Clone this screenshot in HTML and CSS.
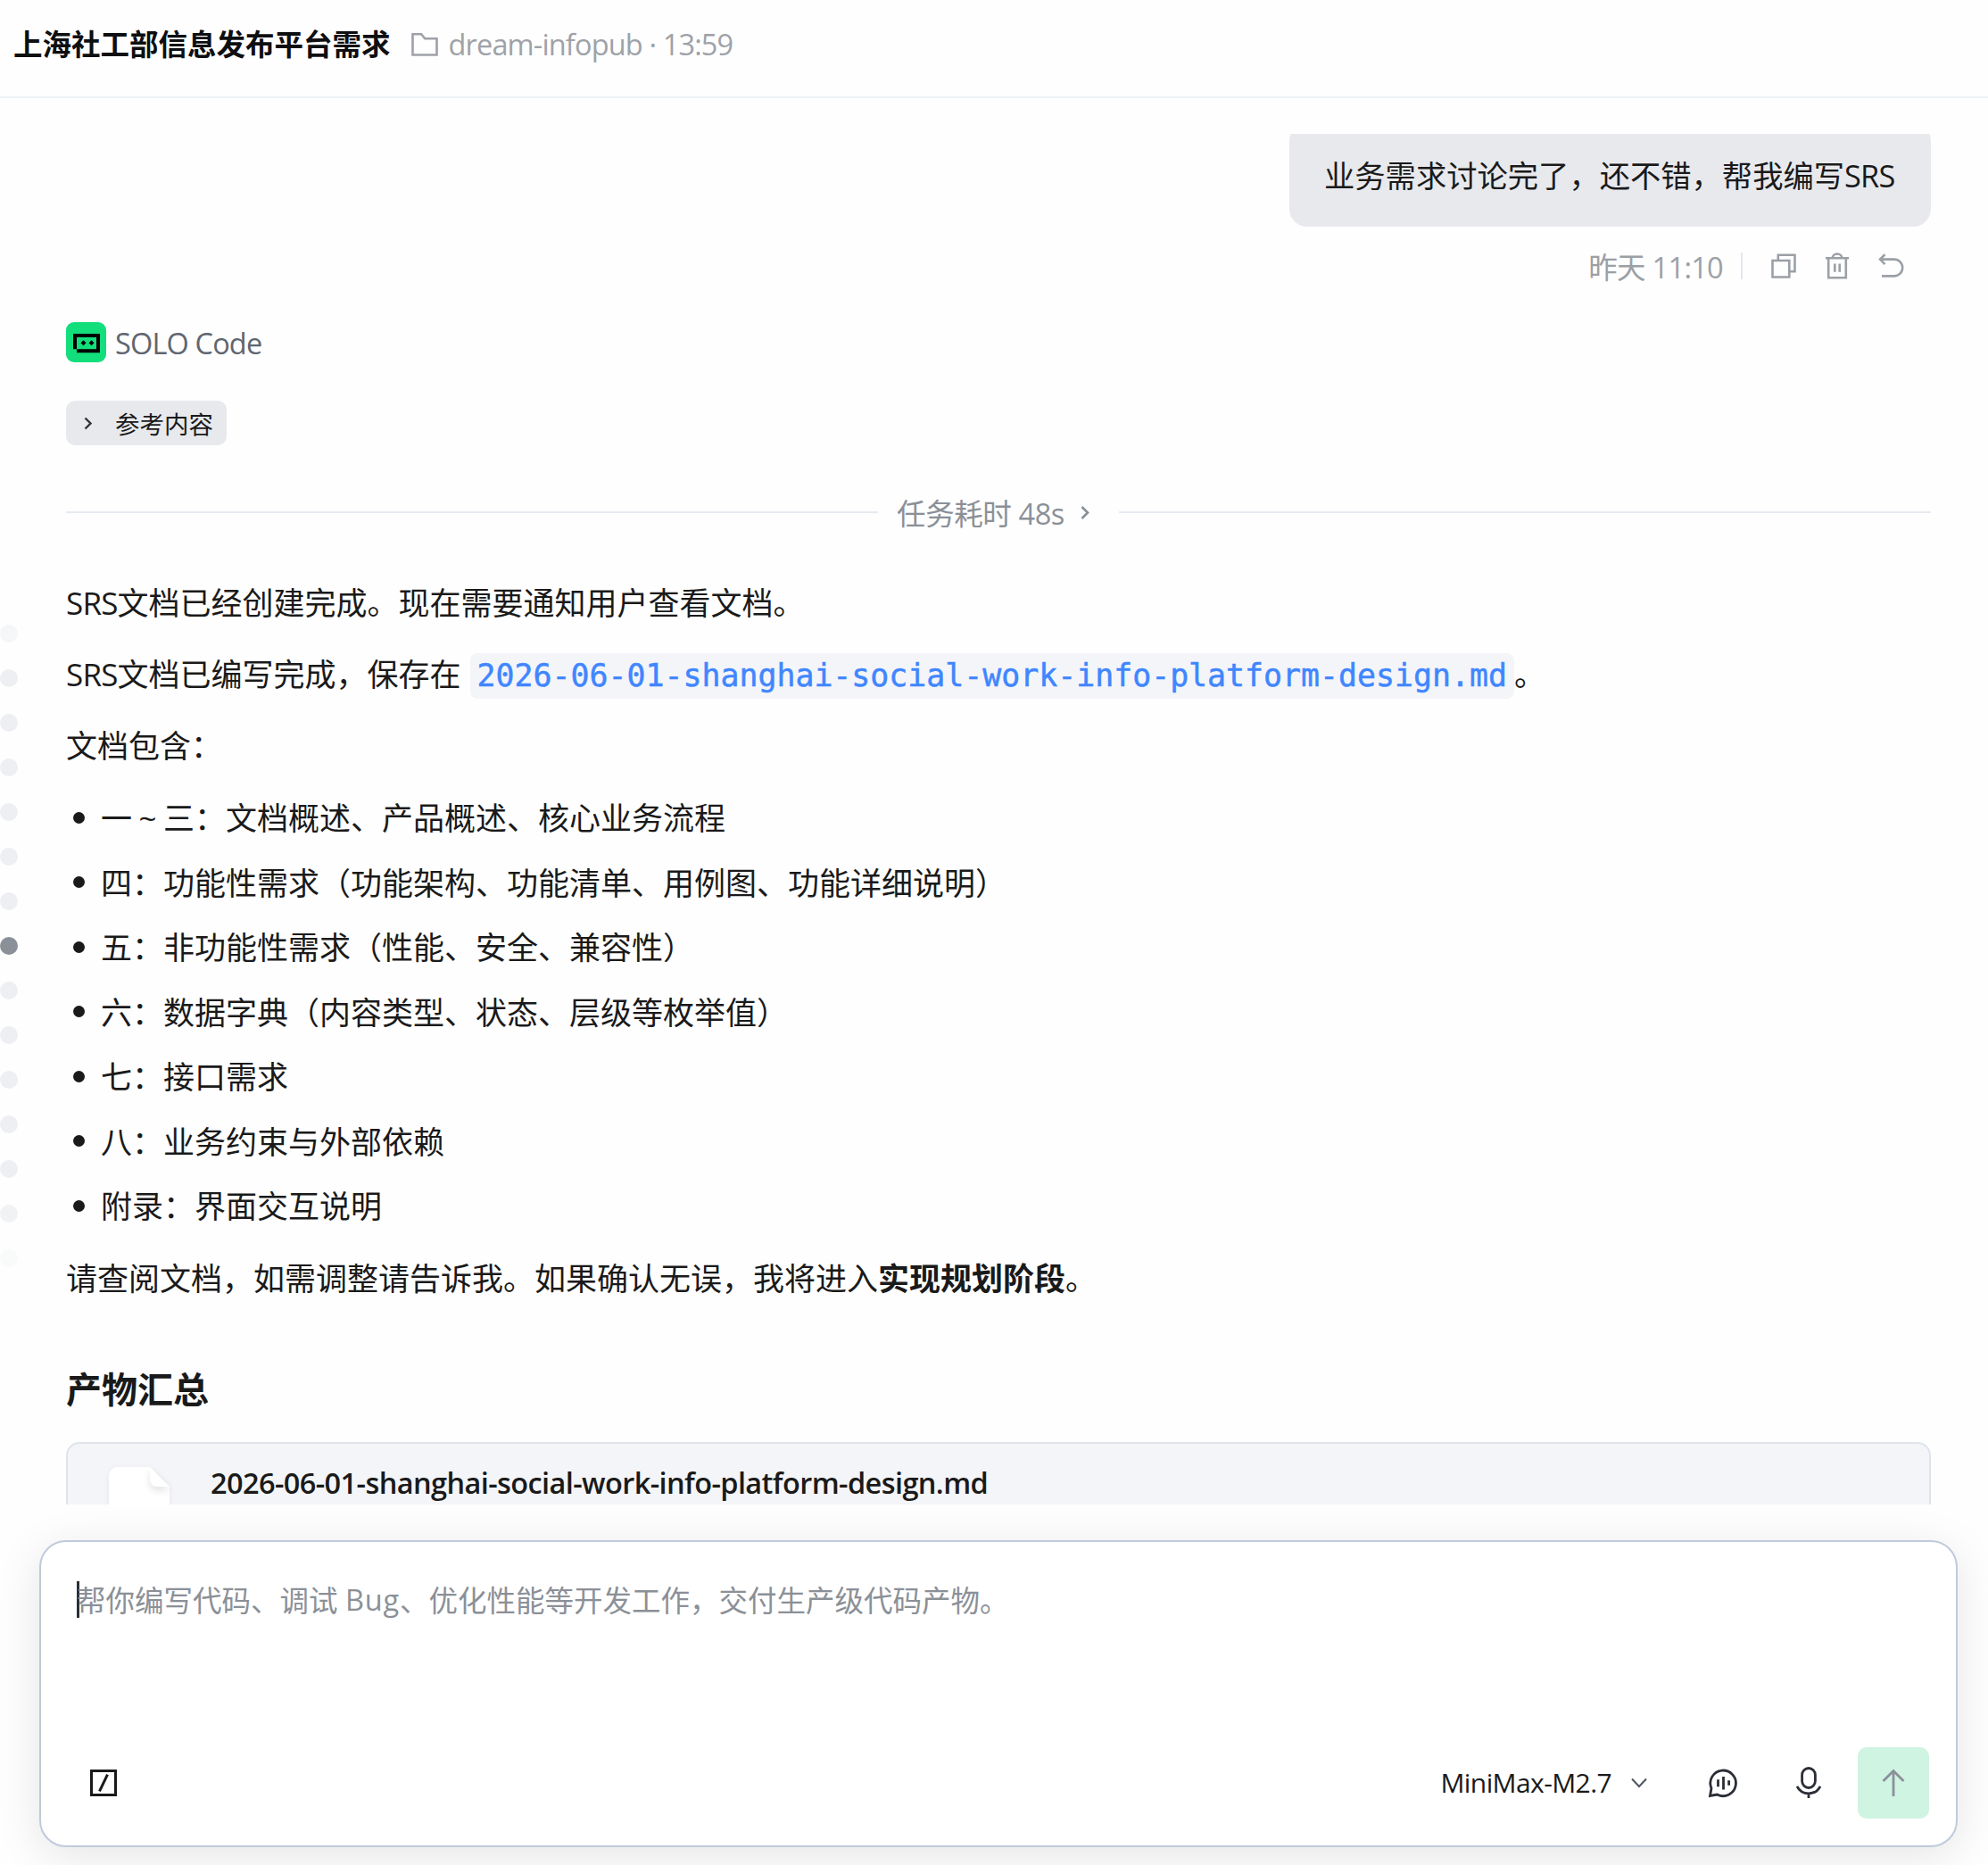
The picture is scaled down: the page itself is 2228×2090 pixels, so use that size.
FILE: index.html
```html
<!DOCTYPE html>
<html lang="zh-CN">
  <head>
    <meta charset="utf-8">
    <title>上海社工部信息发布平台需求</title>
    <link rel="stylesheet" href="styles.css">
  </head>
  <body>
    <header class="topbar">
      <h1 class="title">上海社工部信息发布平台需求</h1>
      <svg class="folder" width="30" height="28" viewBox="0 0 30 28" fill="none" stroke="currentColor" stroke-width="2.6"><path d="M1.5 25.5V2.3h9.7l4 5H28.5v18.2z"/></svg>
      <span class="project">dream-infopub · 13:59</span>
    </header>

    <main class="chat">
      <nav class="rail">
        <i class="dot faint"></i>
        <i class="dot"></i>
        <i class="dot"></i>
        <i class="dot"></i>
        <i class="dot"></i>
        <i class="dot"></i>
        <i class="dot"></i>
        <i class="dot active"></i>
        <i class="dot"></i>
        <i class="dot"></i>
        <i class="dot"></i>
        <i class="dot"></i>
        <i class="dot"></i>
        <i class="dot light"></i>
        <i class="dot fainter"></i>
      </nav>

      <div class="messages">
        <div class="bubble">业务需求讨论完了，还不错，帮我编写<span class="en">SRS</span></div>
        <div class="meta">
          <span class="time">昨天 11:10</span>
          <span class="sep"></span>
          <svg width="28" height="28" viewBox="0 0 28 28" fill="none" stroke="currentColor" stroke-width="2.6"><path d="M1.5 8h18.8v18.5H1.5z"/><path d="M7.8 7.5V1.8h18.7v18.4h-5.7"/></svg>
          <svg width="28" height="30" viewBox="0 0 28 30" fill="none" stroke="currentColor" stroke-width="2.6"><path d="M1 6.3h26M4.2 6.3v21.9h19.6V6.3M8.7 6.3a5.3 4.8 0 0 1 10.6 0M11.3 12.5v9.3M16.7 12.5v9.3"/></svg>
          <svg width="30" height="28" viewBox="0 0 30 28" fill="none" stroke="currentColor" stroke-width="2.6"><path d="M7.5 1.2L2 6.6l5.5 5.6M2.5 6.6h15.3a9.4 9.4 0 0 1 0 18.8H4"/></svg>
        </div>

        <div class="agent">
          <svg width="45" height="45" viewBox="0 0 45 45"><rect width="45" height="45" rx="9" fill="#12de7b"/><path d="M8 13h30v21.3H12v-4H8zM12 17v13.3h22V17z" fill="#000" fill-rule="evenodd"/><path d="M19.5 20.2l3 3-3 3-3-3zM28.5 20.2l3 3-3 3-3-3z" fill="#000"/></svg>
          <span class="agent-name">SOLO Code</span>
        </div>

        <div class="chip">
          <svg width="10" height="15" viewBox="0 0 10 15" fill="none" stroke="#303338" stroke-width="2.4"><path d="M1.5 1.5l6 6-6 6"/></svg>
          <span>参考内容</span>
        </div>

        <div class="cost">
          <span class="cost-text">任务耗时 48s</span>
          <svg width="11" height="17" viewBox="0 0 11 17" fill="none" stroke="currentColor" stroke-width="2.6"><path d="M1.5 2l6.5 6.5L1.5 15"/></svg>
        </div>

        <div class="answer">
          <p><span class="en">SRS</span>文档已经创建完成。现在需要通知用户查看文档。</p>
          <p><span class="en">SRS</span>文档已编写完成，保存在<code>2026-06-01-shanghai-social-work-info-platform-design.md</code>。</p>
          <p>文档包含：</p>
          <ul>
            <li>一<span class="tilde">~</span>三：文档概述、产品概述、核心业务流程</li>
            <li>四：功能性需求（功能架构、功能清单、用例图、功能详细说明）</li>
            <li>五：非功能性需求（性能、安全、兼容性）</li>
            <li>六：数据字典（内容类型、状态、层级等枚举值）</li>
            <li>七：接口需求</li>
            <li>八：业务约束与外部依赖</li>
            <li>附录：界面交互说明</li>
          </ul>
          <p>请查阅文档，如需调整请告诉我。如果确认无误，我将进入<strong>实现规划阶段</strong>。</p>
        </div>

        <h2 class="summary">产物汇总</h2>
        <div class="file">
          <svg class="file-icon" width="68" height="84" viewBox="0 0 68 84"><path d="M10 0h36l22 22v62H0V10A10 10 0 0 1 10 0z" fill="#fff"/><path class="fold" d="M46 0l22 22H54a8 8 0 0 1-8-8z" fill="#fff"/></svg>
          <span class="file-name">2026-06-01-shanghai-social-work-info-platform-design.md</span>
        </div>
      </div>
    </main>

    <section class="composer">
      <div class="input"><span class="caret"></span>帮你编写代码、调试 <span class="bug">Bug</span>、优化性能等开发工作，交付生产级代码产物。</div>
      <div class="tools">
        <svg class="slash" width="30" height="30" viewBox="0 0 30 30" fill="none" stroke="#1a1a1a" stroke-width="3"><path d="M1.5 1.5h27v27h-27z"/><path d="M19.5 5.7l-9 18.6"/></svg>
        <span class="model">MiniMax-M2.7</span>
        <svg class="down" width="18" height="12" viewBox="0 0 18 12" fill="none" stroke="#50565f" stroke-width="2"><path d="M1 1.5l8 8.5 8-8.5"/></svg>
        <svg class="voice" width="34" height="34" viewBox="0 0 34 34" fill="none" stroke="#2b2e35" stroke-width="2.8"><path d="M2.500 31.500l1.500-8.500A14.300 14.300 0 1 1 10.500 30z"/><path d="M11.500 13.200v8M17.500 10v14.500M23.600 14.200v5.500"/></svg>
        <svg class="mic" width="30" height="36" viewBox="0 0 30 36" fill="none" stroke="#2b2e35" stroke-width="2.8"><rect x="7.6" y="1.5" width="14.8" height="22" rx="7.4"/><path d="M2 21.8c2.5 5 7 8 13 8s10.5-3 13-8M15 29.8v5.2"/></svg>
        <button class="send">
          <svg width="26" height="32" viewBox="0 0 26 32" fill="none" stroke="#8b909b" stroke-width="2.8"><path d="M13 31V2.5M1.5 14L13 2.5 24.5 14"/></svg>
        </button>
      </div>
    </section>
  </body>
</html>
```

FILE: styles.css
```css
* {
  box-sizing: border-box;
}
body {
  margin: 0;
  width: 2228px;
  height: 2090px;
  overflow: hidden;
  display: flex;
  flex-direction: column;
  background: #fefefe;
  color: #1a1a1a;
  font-family: "Open Sans", "Noto Sans CJK SC", sans-serif;
  font-size: 35px;
}
svg {
  display: block;
  flex: none;
}

/* header */
.topbar {
  display: flex;
  align-items: center;
  height: 110px;
  padding: 0 15px 9px;
  border-bottom: 2px solid #edf1f7;
  color: #9ea2a8;
}
.title {
  margin: 0;
  font-size: 32.5px;
  line-height: 50px;
  font-weight: 700;
  color: #0e0f11;
}
.folder {
  margin-left: 23px;
}
.project {
  margin-left: 12px;
  font-size: 32.5px;
  letter-spacing: -0.85px;
}

/* conversation */
.chat {
  display: flex;
  height: 1536px;
  margin-top: 40px;
  overflow: hidden;
}
.rail {
  width: 20px;
  padding-top: 550px;
  display: flex;
  flex-direction: column;
  gap: 30px;
}
.dot {
  flex: none;
  width: 20px;
  height: 20px;
  border-radius: 50%;
  background: #edeff2;
}
.dot.active {
  background: #8a9098;
}
.dot.light {
  background: #f1f2f4;
}
.dot.faint {
  background: #f5f6f7;
}
.dot.fainter {
  background: #f9fafa;
}
.messages {
  width: 2090px;
  margin-left: 54px;
  display: flex;
  flex-direction: column;
  flex: none;
}
.messages > * {
  flex: none;
}
.bubble {
  align-self: flex-end;
  width: 719px;
  height: 116px;
  margin-top: -12px;
  padding: 0 0 0 39px;
  border-radius: 20px;
  background: #e8e9ed;
  font-size: 34.3px;
  line-height: 118px;
  white-space: nowrap;
}
.meta {
  align-self: flex-end;
  display: flex;
  align-items: center;
  height: 50px;
  margin: 19px 29px 0 0;
  color: #9ba0a6;
}
.meta svg + svg {
  margin-left: 32px;
}
.time {
  font-size: 32.5px;
  letter-spacing: -0.7px;
}
.sep {
  width: 2px;
  height: 30px;
  margin: 0 32px 0 20px;
  background: #e2e6ee;
}
.agent {
  display: flex;
  align-items: center;
  height: 45px;
  margin-top: 38px;
}
.agent-name {
  margin: 2px 0 0 10px;
  font-size: 32.5px;
  letter-spacing: -0.85px;
  color: #5f6670;
}
.chip {
  display: flex;
  align-items: center;
  width: 180px;
  height: 50px;
  margin-top: 43px;
  padding-left: 20px;
  border-radius: 10px;
  background: #e8e9ed;
  font-size: 27.5px;
}
.chip span {
  margin-left: 25px;
}
.cost {
  display: flex;
  align-items: center;
  height: 50px;
  margin-top: 50px;
  color: #8b9097;
  font-size: 32.5px;
}
.cost::before,
.cost::after {
  content: "";
  flex: 1;
  height: 2px;
  background: #e6eaf1;
}
.cost-text {
  margin: 0 18px 0 21px;
  letter-spacing: -0.4px;
}
.cost svg {
  margin-right: 32px;
}

/* answer text */
.answer {
  margin-top: 49px;
  line-height: 56px;
  white-space: nowrap;
}
.answer p {
  height: 56px;
  margin: 0 0 24px;
}
.answer ul {
  list-style: none;
  margin: 0 0 25px;
  padding: 1px 0 0;
  display: flex;
  flex-direction: column;
  gap: 16.5px;
}
.answer li {
  display: flex;
  align-items: center;
  height: 56px;
}
.answer li::before {
  content: "";
  width: 13px;
  height: 13px;
  margin: 0 18px 2px 8px;
  border-radius: 50%;
  background: #1a1a1a;
}
.en {
  letter-spacing: -0.8px;
}
.tilde {
  width: 35px;
  text-align: center;
}
code {
  margin-left: 10px;
  padding: 5px 8px 6px;
  border-radius: 8px;
  background: #f4f5f8;
  color: #4086ff;
  font-family: "DejaVu Sans Mono", monospace;
  font-size: 34.87px;
  -webkit-text-stroke: 0.5px #4086ff;
}
.summary {
  margin: 42px 0 0;
  font-size: 40px;
  line-height: 60px;
}
.file {
  display: flex;
  height: 150px;
  margin-top: 29px;
  padding: 26px 46px;
  border: 2px solid #dfe4eb;
  border-radius: 15px;
  background: #f4f5f8;
}
.file-icon {
  overflow: visible;
  filter: drop-shadow(0 2px 3px rgba(0, 0, 0, .06));
}
.fold {
  filter: drop-shadow(0 4px 4px rgba(0, 0, 0, .12));
}
.file-name {
  margin-left: 46px;
  font-size: 32.5px;
  line-height: 36px;
  font-weight: 600;
  letter-spacing: -0.6px;
}

/* composer */
.composer {
  width: 2150px;
  height: 344px;
  margin: 40px 0 0 44px;
  padding: 36px 30px 30px 40px;
  display: flex;
  flex-direction: column;
  justify-content: space-between;
  border: 2px solid #bfcadc;
  border-radius: 30px;
  background: #fff;
  box-shadow: 0 10px 50px rgba(0, 0, 0, .1);
}
.input {
  display: flex;
  align-items: center;
  height: 56px;
  font-size: 32.5px;
  color: #8b9097;
  white-space: pre;
}
.caret {
  width: 3px;
  height: 41px;
  margin-right: -3px;
  background: #2b2e35;
}
.bug {
  letter-spacing: 0.8px;
}
.tools {
  display: flex;
  align-items: center;
  height: 80px;
}
.slash {
  margin-left: 15px;
}
.model {
  margin: -2px 0 0 auto;
  font-size: 30px;
  letter-spacing: -0.6px;
}
.down {
  margin-left: 22px;
}
.voice {
  margin-left: 68px;
}
.mic {
  margin-left: 64px;
}
.send {
  display: flex;
  align-items: center;
  justify-content: center;
  width: 80px;
  height: 80px;
  margin-left: 40px;
  padding: 0;
  border: 0;
  border-radius: 10px;
  background: #cff4e2;
}
```
